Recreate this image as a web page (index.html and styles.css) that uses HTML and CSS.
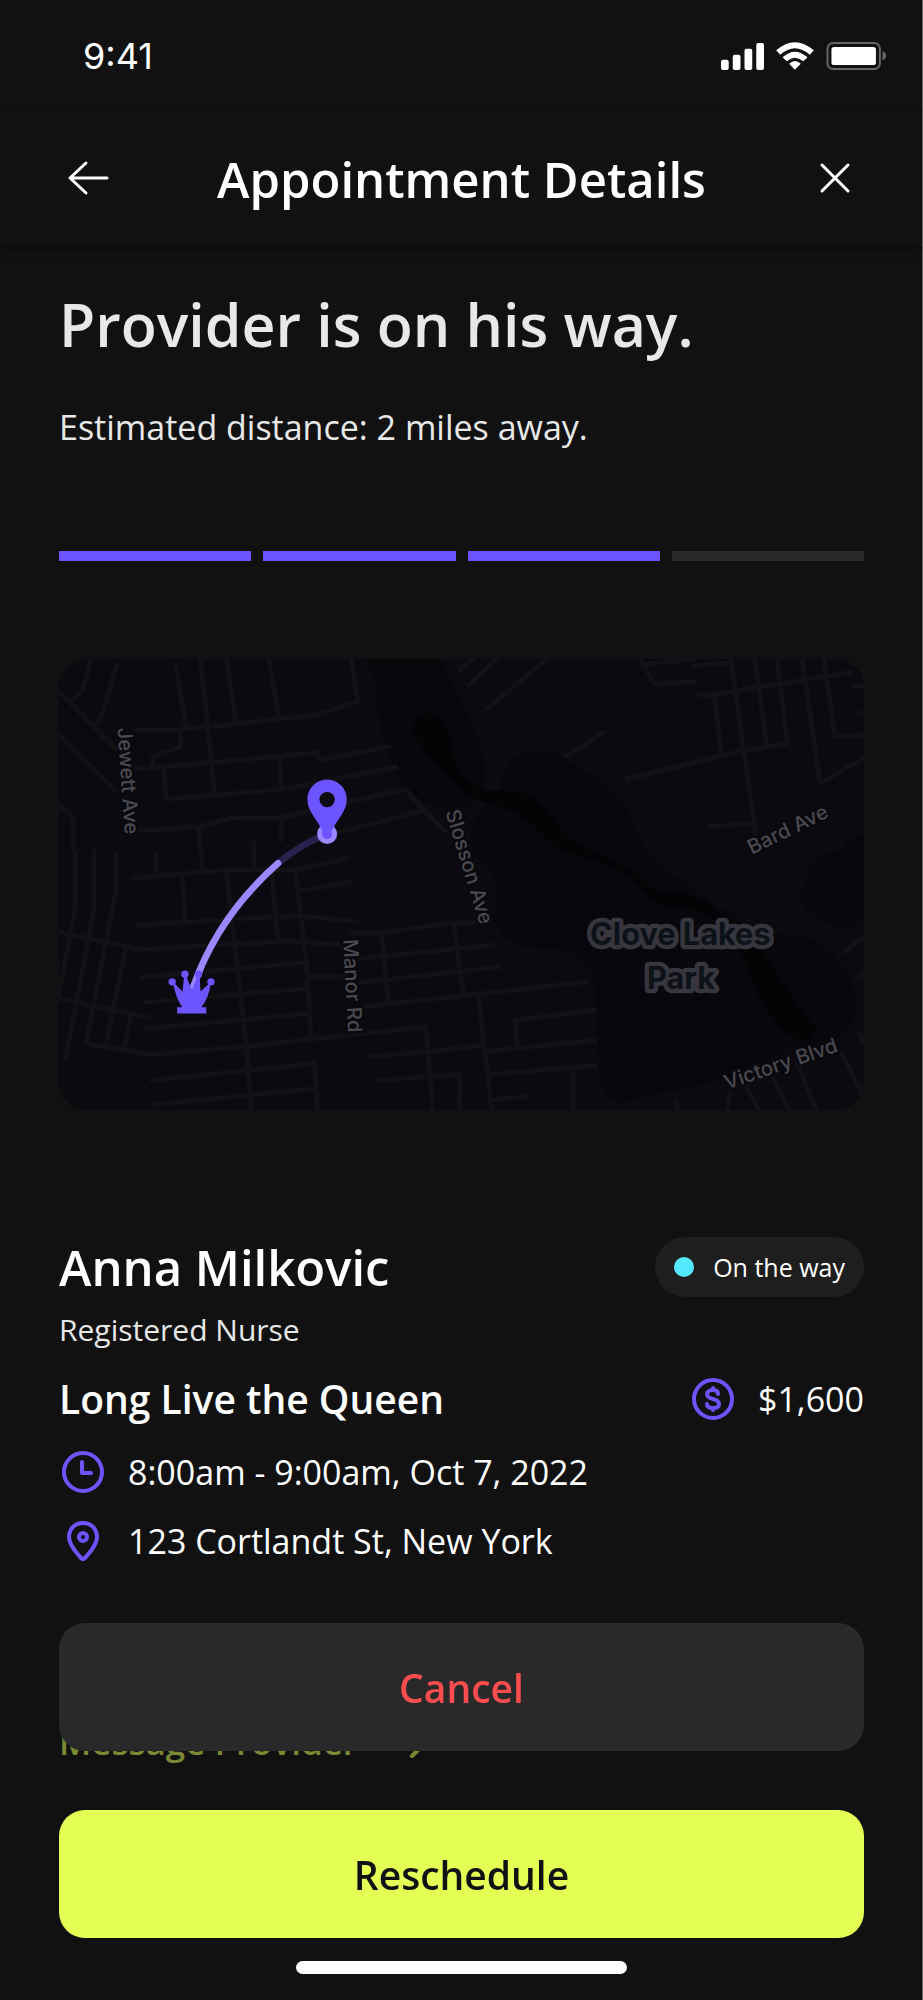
FILE: index.html
```html
<!DOCTYPE html>
<html lang="en">

<head>
    <meta charset="UTF-8">
    <meta name="viewport" content="width=device-width, initial-scale=1.0">
    <title>Appointment Details</title>

    <link rel="stylesheet" href="styles.css">
</head>

<body>

    <div class="screen">
        <div class="status-bar">
            <span class="time">9:41</span>
            <div class="status-icons">
                <svg class="signal" viewBox="67 40 128 80" width="43" height="27" aria-hidden="true">
                    <rect x="67" y="90" width="23" height="30" rx="6" />
                    <rect x="102" y="75" width="23" height="45" rx="6" />
                    <rect x="137" y="57" width="23" height="63" rx="6" />
                    <rect x="172" y="40" width="23" height="80" rx="6" />
                </svg>
                <svg class="wifi" viewBox="230 37 113 84" width="38" height="28" aria-hidden="true">
                    <path d="M230 62 Q286 13 343 62 L331 75 Q286 36 242 75 Z" />
                    <path d="M249 83 Q286 49 324 83 L311 95 Q286 73 262 95 Z" />
                    <path d="M269 102 Q286 86 304 102 L286 120 Z" />
                </svg>
                <svg class="battery" viewBox="379 38 182 85" width="61" height="28" aria-hidden="true">
                    <rect x="382" y="41" width="159" height="79" rx="17" fill="none" stroke="#666" stroke-width="6" />
                    <rect x="394" y="53" width="135" height="55" rx="8" />
                    <path d="M549 66 Q560 70 560 80 Q560 90 549 94 Z" fill="#666" />
                </svg>
            </div>
        </div>

        <header class="header">
            <button type="button" class="icon-btn" aria-label="Back">
                <svg viewBox="0 0 44 44" width="44" height="44">
                    <path d="M41 21H4M20 6L4 21l16 15" />
                </svg>
            </button>
            <h1>Appointment Details</h1>
            <button type="button" class="icon-btn" aria-label="Close">
                <svg viewBox="0 0 44 44" width="44" height="44">
                    <path d="M9 8l26 26M35 8L9 34" />
                </svg>
            </button>
        </header>

        <main class="content">
            <h2 class="headline">Provider is on his way.</h2>
            <p class="distance">Estimated distance: 2 miles away.</p>

            <div class="progress">
                <span class="step done"></span>
                <span class="step done"></span>
                <span class="step done"></span>
                <span class="step"></span>
            </div>

            <svg class="map" viewBox="29 28 2411 1350" role="img" aria-label="Map of the provider's route">
                <!-- park -->
                <g class="park">
                    <path d="M950 28 L980 110 Q985 280 1040 370 Q1090 450 1170 480 L1260 470 Q1310 430 1305 360 Q1290 250 1220 130 L1170 28 Z" />
                    <path d="M1355 420 Q1350 330 1440 302 Q1510 295 1560 340 Q1700 400 1750 510 Q1760 590 1850 660 Q1950 740 2060 800 Q2150 860 2270 860 Q2340 880 2400 990 Q2440 1100 2370 1160 Q2200 1190 2040 1280 L1710 1357 Q1660 1350 1650 1280 L1630 990 Q1610 900 1500 895 Q1350 900 1330 800 Q1360 700 1320 660 Q1250 600 1260 540 Q1300 450 1355 420 Z" />
                    <path d="M2440 555 Q2390 560 2370 600 Q2300 620 2265 650 Q2280 690 2245 730 Q2250 780 2320 810 Q2370 860 2440 805 Z" />
                </g>
                <!-- water -->
                <g class="water">
                    <path d="M1090 240 Q1090 190 1140 190 Q1200 205 1210 310 Q1230 400 1320 422 L1400 424 Q1470 440 1515 510 Q1560 585 1630 605 Q1730 640 1780 690 Q1830 745 1890 728 Q1960 740 2020 800 Q2110 860 2170 950 Q2230 1060 2295 1130 Q2300 1175 2250 1170 Q2180 1150 2110 1010 Q2080 900 2020 830 Q1950 770 1850 770 Q1800 755 1760 700 Q1720 660 1640 635 Q1530 610 1480 560 Q1420 490 1350 470 Q1280 460 1240 420 Q1100 300 1090 240 Z" />
                </g>
                <!-- streets, west side -->
                <g class="streets">
                    <path d="M125 28L100 122 65 155M202 44L158 195 135 230M29 125L200 298M29 255L200 425M29 465L72 505V598L78 610V770L29 1035" />
                    <path d="M378 44L410 232M452 28L475 235 495 430M530 28L558 210M658 28L686 200M905 28L924 155 802 195 475 232 380 240H260" />
                    <path d="M393 242V290L310 322 306 350M255 358L490 338 803 308 814 330 1018 290M343 358L350 448 495 436 700 418 1038 352M690 325L695 415" />
                    <path d="M270 543L450 530 550 503H695L1065 418 1185 545M448 532V590L456 600V655M695 505V570M612 578V655M320 608V670M245 685L530 660H740L895 623" />
                    <path d="M865 547L1120 482M752 723L905 695M398 680L407 810M530 665L560 925 590 1190 605 1378M665 660L684 870M738 665L770 940 784 1160" />
                    <path d="M267 825L540 808 752 797 922 815M29 845L270 898 715 873 890 884M135 600V770L50 1220M200 608V720L110 1180 298 1212M230 890L170 1180M29 1045L298 1102M243 1100L225 1190" />
                    <path d="M280 980L765 937M775 980H880M290 1056L770 1015M290 1135L775 1090M305 1213L590 1188 1128 1130 1148 1378M305 1290L795 1240 802 1378M310 1363L795 1315" />
                    <path d="M905 848H995L1205 818H1290M995 850L1015 1055M930 925L1330 885M930 997L1350 950M940 1070L1610 995M1210 820L1240 1030M955 1220L1300 1187M985 1290L1230 1272 1228 1378" />
                </g>
                <!-- streets, east side -->
                <g class="streets" transform="translate(1230 0)">
                    <path d="M0 60L40 28M25 107L110 28M83 175L260 28M320 318L430 248M500 387L850 302 980 282 950 28M540 28L583 103 705 95M560 42L700 30M700 48L815 38" />
                    <path d="M710 135H760L1172 67M762 140L782 310M812 28L850 302 887 555M883 28L918 285M1025 28L1078 400 1210 325M1090 28L1123 260 1210 255M1180 108H1210M1195 190H1210M750 530L875 520" />
                    <path d="M55 1035L95 1378M172 1190L165 1110 405 1080M80 1203L405 1170M90 1272L408 1245M338 1250V1378M100 1348L205 1338M0 1190L65 1185" />
                    <path d="M1150 905L1210 860M1195 978L1210 970M1195 1148L1210 1175M1145 1210L1210 1340M1010 1240L1068 1378M935 1280L985 1378M860 1310L895 1378M808 1325L800 1378M645 1350L652 1378" />
                </g>
                <!-- street names -->
                <g class="labels">
                    <text transform="translate(204 235) rotate(86)">Jewett Ave</text>
                    <text transform="translate(880 868) rotate(87)">Manor Rd</text>
                    <text transform="translate(1186 486) rotate(73)">Slosson Ave</text>
                    <text transform="translate(2104 614) rotate(-26)">Bard Ave</text>
                    <text transform="translate(2030 1318) rotate(-19)">Victory Blvd</text>
                </g>
                <g class="park-name">
                    <text x="1890" y="884">Clove Lakes</text>
                    <text x="1892" y="1016">Park</text>
                </g>
                <!-- route -->
                <path class="route-left" d="M685 640Q750 585 832 552" />
                <path class="route-done" d="M431 1010C480 870 560 750 685 640" />
                <circle cx="832" cy="552" r="30" fill="#9b87ff" />
                <circle cx="832" cy="552" r="15" fill="#6c55ff" />
                <path fill="#6c55ff" d="M832 390C799 390 773 416 773 449C773 485 805 512 819 545Q832 560 845 545C859 512 891 485 891 449C891 416 865 390 832 390Z" />
                <circle cx="832" cy="449" r="23" fill="#0c0b10" />
                <g fill="#6c55ff">
                    <circle cx="368" cy="995" r="11" />
                    <circle cx="406" cy="972" r="11" />
                    <circle cx="447" cy="972" r="11" />
                    <circle cx="484" cy="995" r="11" />
                    <path d="M370 995L399 1024 404 975H409L427 1020 444 975H450L453 1024 484 995Q478 1045 455 1071H470V1090H383V1071H398Q377 1040 370 995Z" />
                </g>
            </svg>

            <section class="details">
                <div class="row">
                    <h2 class="name">Anna Milkovic</h2>
                    <span class="badge"><span class="dot"></span>On the way</span>
                </div>
                <p class="role">Registered Nurse</p>
                <div class="row service">
                    <h3>Long Live the Queen</h3>
                    <span class="info price">
                        <svg class="icon" viewBox="0 0 48 48" width="48" height="48" aria-hidden="true">
                            <circle cx="24" cy="24" r="19" />
                            <path d="M29 19C29 16 27 15 24 15C20 15 18 17 18 19C18 22 20 23 24 24C28 25 30 26 30 29C30 32 28 33 24 33C20 33 18 32 18 29M24 13V15M24 33v2" />
                        </svg>
                        $1,600
                    </span>
                </div>
                <p class="info">
                    <svg class="icon" viewBox="0 0 48 48" width="48" height="48" aria-hidden="true">
                        <circle cx="24" cy="24" r="19" />
                        <path d="M23 14V25H32" />
                    </svg>
                    8:00am - 9:00am, Oct 7, 2022
                </p>
                <p class="info">
                    <svg class="icon" viewBox="0 0 48 48" width="48" height="48" aria-hidden="true">
                        <path d="M24 6C15 6 10 13 10 20C10 29 19 37 22 41Q24 43 26 41C29 37 38 29 38 20C38 13 33 6 24 6Z" />
                        <circle cx="24" cy="20" r="4" />
                    </svg>
                    123 Cortlandt St, New York
                </p>
                <a href="#" class="message">
                    Message Provider
                    <svg viewBox="0 0 32 32" width="32" height="32" aria-hidden="true">
                        <path d="M6 2l14 14-14 14" />
                    </svg>
                </a>
            </section>
        </main>

        <footer class="actions">
            <button type="button" class="btn btn-cancel">Cancel</button>
            <button type="button" class="btn btn-primary">Reschedule</button>
            <div class="home-indicator"></div>
        </footer>
    </div>

</body>

</html>
```
FILE: styles.css
```css
* {
    box-sizing: border-box;
}

body {
    margin: 0;
    font-family: "Open Sans", "Noto Sans", sans-serif;
    background-color: #111;
    color: #fff;
}

h1, h2, h3, p {
    margin: 0;
    font-weight: 600;
}

.screen {
    position: relative;
    min-height: 100vh;
    overflow: hidden;
    box-shadow: inset -1px -1px 0 #666;
}

/* Status bar */
.status-bar {
    display: flex;
    align-items: center;
    justify-content: space-between;
    height: 112px;
    padding: 0 36px 0 83px;
}

.time {
    font-family: Inter, sans-serif;
    font-size: 36px;
}

.status-icons {
    display: flex;
    align-items: center;
    gap: 12px;
    fill: #fff;
}

/* Header */
.header {
    display: flex;
    align-items: center;
    justify-content: space-between;
    height: 134px;
    padding: 0 66px;
    box-shadow: 0 2px 8px rgba(0, 0, 0, 0.4);
}

.header h1 {
    font-size: 49px;
    line-height: 64px;
}

.icon-btn {
    padding: 0;
    border: none;
    background: none;
    cursor: pointer;
}

.icon-btn svg {
    display: block;
    fill: none;
    stroke: #fff;
    stroke-width: 3;
    stroke-linecap: round;
    stroke-linejoin: round;
}

/* Content */
.content {
    padding: 38px 59px 234px;
}

.headline {
    color: #e8e8e8;
    font-size: 59px;
    line-height: 80px;
}

.distance {
    margin-top: 39px;
    color: #e8e8e8;
    font-size: 34px;
    font-weight: 400;
    line-height: 48px;
}

.progress {
    display: flex;
    gap: 12px;
    margin-top: 100px;
}

.step {
    flex: 1;
    height: 10px;
    background-color: #292929;
}

.step.done {
    background-color: #6c55ff;
}

/* Map */
.map {
    display: block;
    width: 100%;
    margin-top: 98px;
    border-radius: 28px;
    background-color: #0b0a10;
}

.park {
    fill: #08070c;
}

.water {
    fill: #040407;
}

.streets {
    fill: none;
    stroke: #111116;
    stroke-width: 14;
    stroke-linecap: round;
    stroke-linejoin: round;
}

.labels {
    font-family: Inter, sans-serif;
    font-size: 61px;
    font-weight: 500;
    fill: #4a4950;
    stroke: #09080c;
    stroke-width: 12;
    paint-order: stroke;
}

.park-name {
    font-family: Inter, sans-serif;
    font-size: 92px;
    font-weight: 700;
    text-anchor: middle;
    fill: #0d1118;
    stroke: #37363e;
    stroke-width: 26;
    stroke-linejoin: round;
    paint-order: stroke;
}

.route-left,
.route-done {
    fill: none;
    stroke: #29214d;
    stroke-width: 20;
}

.route-done {
    stroke: #9b87ff;
    stroke-linecap: round;
}

/* Appointment details */
.details {
    margin-top: 127px;
}

.row {
    display: flex;
    align-items: center;
    justify-content: space-between;
}

.name {
    font-size: 49px;
    line-height: 60px;
}

.badge {
    display: flex;
    align-items: center;
    gap: 19px;
    padding: 0 19px;
    border-radius: 30px;
    background-color: #1e1e1e;
    font-size: 25px;
    line-height: 60px;
}

.dot {
    width: 20px;
    height: 20px;
    border-radius: 50%;
    background-color: #54e8ff;
}

.role {
    margin-top: 13px;
    color: #e8e8e8;
    font-size: 30px;
    font-weight: 400;
    line-height: 40px;
}

.service {
    margin-top: 24px;
    margin-bottom: 24px;
}

.service h3 {
    font-size: 39px;
    line-height: 50px;
}

.info {
    display: flex;
    align-items: center;
    gap: 21px;
    font-size: 34px;
    font-weight: 400;
    line-height: 48px;
}

.info + .info {
    margin-top: 21px;
}

.icon {
    fill: none;
    stroke: #6c55ff;
    stroke-width: 4;
    stroke-linecap: round;
    stroke-linejoin: round;
}

.message {
    display: flex;
    align-items: center;
    gap: 48px;
    margin-top: 152px;
    color: #e6ff55;
    font-size: 35px;
    font-weight: 600;
    line-height: 50px;
    text-decoration: none;
    opacity: 0.5;
}

.message svg {
    fill: none;
    stroke: currentColor;
    stroke-width: 4;
    stroke-linecap: round;
}

/* Buttons stay over the scrolling content */
.actions {
    position: fixed;
    right: 0;
    bottom: 0;
    left: 0;
    display: flex;
    flex-direction: column;
    padding: 0 59px 26px;
}

.btn {
    height: 128px;
    padding: 0;
    border: none;
    border-radius: 26px;
    font-family: inherit;
    font-size: 39px;
    font-weight: 600;
    cursor: pointer;
}

.btn-cancel {
    margin-bottom: 59px;
    background-color: #292929;
    color: #ff4d4f;
}

.btn-primary {
    background-color: #e6ff55;
    color: #111;
}

.home-indicator {
    align-self: center;
    width: 41%;
    height: 13px;
    margin-top: 23px;
    border-radius: 7px;
    background-color: #fff;
}
```
